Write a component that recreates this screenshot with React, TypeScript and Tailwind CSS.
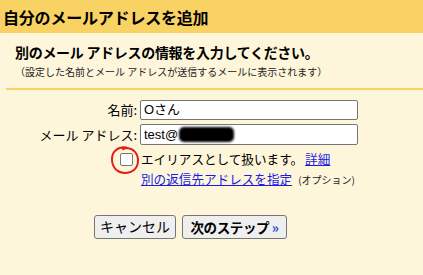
import React from 'react';

const jp = "font-['Noto_Sans_CJK_JP','Noto_Sans',sans-serif]";

export default function App() {
    return (
        <div className={`w-[423px] h-[275px] bg-[#fef6da] text-black ${jp}`}>
            {/* Header */}
            <div className="h-[33px] bg-[#f9d264] flex items-center pl-[3px]">
                <h1 className="text-[16px] font-bold leading-none tracking-[-0.2px]">自分のメールアドレスを追加</h1>
            </div>

            {/* Intro */}
            <div className="pl-[15px] pt-[9px]">
                <p className="text-[14px] font-bold leading-[20px] tracking-[-0.3px]">別のメール アドレスの情報を入力してください。</p>
                <p className="text-[10px] leading-[14px] mt-[3px] text-[#222]">（設定した名前とメール アドレスが送信するメールに表示されます）</p>
            </div>
            <div className="ml-[6px] mt-[9px] h-[2px] bg-[#f9d264]" />

            {/* Form */}
            <div className="grid grid-cols-[137px_218px] gap-x-[3px] gap-y-[4px] mt-[10px] text-[13px]">
                <label className="flex items-center justify-end">名前:</label>
                <div className="h-[20px] bg-white border border-[#767676] rounded-[2px] flex items-center px-[3px] font-['Liberation_Sans','Noto_Sans_CJK_JP',sans-serif]">
                    Oさん
                </div>
                <label className="flex items-center justify-end">メール アドレス:</label>
                <div className="h-[21px] bg-white border border-[#767676] rounded-[2px] flex items-center px-[3px] font-['Liberation_Sans','Noto_Sans_CJK_JP',sans-serif]">
                    test@
                    <span className="ml-[1px] w-[55px] h-[15px] bg-black rounded-[5px] blur-[1px]" />
                </div>
            </div>

            <div className="pl-[120px] mt-[7px] text-[12.6px]">
                <div className="flex items-center h-[14px]">
                    <span className="relative w-[13px] h-[13px] bg-white border border-[#767676] rounded-[2px] mr-[8px] shrink-0">
                        <svg className="absolute -left-[12px] -top-[10px] w-[32px] h-[32px] overflow-visible" viewBox="0 0 32 32">
                            <path
                                d="M17 3.5 C9 2.5 2.5 7.5 3 16 C3.5 25 10 29.5 17 29 C24 28.5 29 24 29 16.5 C29 9 24 4.5 18 4 C16.5 4 15 4.5 14 5.2"
                                fill="none"
                                stroke="#e61e14"
                                strokeWidth="2"
                                strokeLinecap="round"
                            />
                        </svg>
                    </span>
                    <span>エイリアスとして扱います。</span>
                    <a href="#" className="ml-[2px] text-[#1a1ae6] underline">詳細</a>
                </div>
                <div className="flex items-baseline mt-[4px] pl-[21px]">
                    <a href="#" className="text-[#1a1ae6] underline">別の返信先アドレスを指定</a>
                    <span className="ml-[6px] text-[10px] text-[#222]">(オプション)</span>
                </div>
            </div>

            {/* Buttons */}
            <div className="flex gap-[6px] pl-[94px] mt-[26px]">
                <button className="h-[24px] w-[82px] bg-[#efefef] border border-[#767676] rounded-[3px] text-[14px]">キャンセル</button>
                <button className="h-[24px] w-[105px] bg-[#efefef] border border-[#767676] rounded-[3px] text-[13.5px] font-bold tracking-[-0.4px]">
                    次のステップ <span className="text-[#2250c8]">»</span>
                </button>
            </div>
        </div>
    );
}
